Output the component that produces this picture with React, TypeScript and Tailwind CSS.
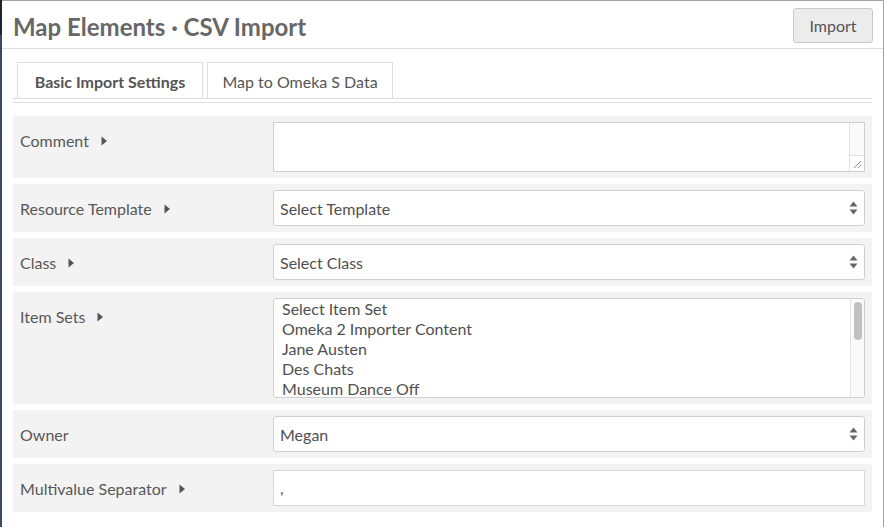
import React from 'react'

const itemSets = ['Select Item Set', 'Omeka 2 Importer Content', 'Jane Austen', 'Des Chats', 'Museum Dance Off']

const Caret = () => (
  <svg width="7" height="10" viewBox="0 0 7 10" className="ml-[12px] shrink-0">
    <path d="M0.5 0.5 L6 5 L0.5 9.5 Z" fill="#555" />
  </svg>
)

const SelectArrows = () => (
  <svg width="9" height="14" viewBox="0 0 9 14" className="shrink-0">
    <path d="M4.5 0.5 L8.5 5.5 L0.5 5.5 Z" fill="#666" />
    <path d="M4.5 13.5 L8.5 8.5 L0.5 8.5 Z" fill="#666" />
  </svg>
)

const Label = ({ text, caret = true }: { text: string; caret?: boolean }) => (
  <div className="w-[260px] shrink-0 pl-[7px] pt-[9px] flex items-center self-start">
    <span className="text-[16px] leading-[20px] text-[#585858]">{text}</span>
    {caret && <Caret />}
  </div>
)

const Row = ({ children }: { children: React.ReactNode }) => (
  <div className="flex bg-[#f3f3f3] py-[6px] pr-[7px]">{children}</div>
)

const FakeSelect = ({ value }: { value: string }) => (
  <div className="flex-1 h-[36px] bg-white border border-[#cfcfcf] rounded-[3px] flex items-center pl-[6px] pr-[6px]">
    <span className="flex-1 text-[16px] text-[#505050] pt-[1px]">{value}</span>
    <SelectArrows />
  </div>
)

export default function App() {
  return (
    <div className="w-[886px] h-[527px] flex bg-white font-['Lato',sans-serif] overflow-hidden">
      <div className="w-[2px] shrink-0 flex flex-col">
        <div className="h-[35px] bg-[#1c242e]" />
        <div className="flex-1 bg-[#3d4a5c]" />
      </div>
      <div className="w-[882px] shrink-0 border-t border-r border-[#a3a3a3] flex flex-col">
        <div className="h-[48px] border-b border-[#dedede] flex items-center justify-between pl-[11px] pr-[10px]">
          <h1 className="text-[24px] font-bold text-[#676767] pt-[4px]">
            Map Elements · CSV Import
          </h1>
          <button className="w-[80px] h-[35px] mt-[2px] bg-[#ececec] border border-[#c8c8c8] rounded-[3px] text-[16px] text-[#555]">
            Import
          </button>
        </div>

        <div className="px-[11px] pt-[13px]">
          <div className="flex border-b border-[#dedede] pl-[4px] gap-[4px]">
            <div className="w-[186px] h-[36px] pt-[2px] border border-b-0 border-[#dedede] flex items-center justify-center text-[16px] font-bold text-[#555]">
              Basic Import Settings
            </div>
            <div className="w-[186px] h-[36px] pt-[2px] border border-b-0 border-[#dedede] flex items-center justify-center text-[16px] text-[#555]">
              Map to Omeka S Data
            </div>
          </div>
          <div className="mt-[3px] border-t border-[#dedede]" />

          <div className="mt-[13px] flex flex-col gap-[6px]">
            <Row>
              <Label text="Comment" />
              <div className="flex-1 h-[50px] bg-white border border-[#cfcfcf] flex justify-end">
                <div className="w-[15px] flex flex-col border-l border-[#e0e0e0]">
                  <div className="flex-1 bg-[#fafafa]" />
                  <div className="h-[16px] border-t border-[#e0e0e0] bg-white flex items-end justify-end">
                    <svg width="10" height="10" viewBox="0 0 10 10" className="mb-[2px] mr-[2px]">
                      <path d="M9 2 L2 9 M9 6 L6 9" stroke="#888" strokeWidth="1" />
                    </svg>
                  </div>
                </div>
              </div>
            </Row>
            <Row>
              <Label text="Resource Template" />
              <FakeSelect value="Select Template" />
            </Row>
            <Row>
              <Label text="Class" />
              <FakeSelect value="Select Class" />
            </Row>
            <Row>
              <Label text="Item Sets" />
              <div className="flex-1 h-[100px] bg-white border border-[#cfcfcf] rounded-[3px] flex overflow-hidden">
                <div className="flex-1 pl-[8px] flex flex-col">
                  {itemSets.map((s) => (
                    <div key={s} className="h-[20px] leading-[20px] text-[16px] text-[#505050]">
                      {s}
                    </div>
                  ))}
                </div>
                <div className="w-[14px] border-l border-[#e3e3e3] bg-[#fafafa] flex justify-center pt-[3px]">
                  <div className="w-[8px] h-[38px] rounded-full bg-[#c1c1c1]" />
                </div>
              </div>
            </Row>
            <Row>
              <Label text="Owner" caret={false} />
              <FakeSelect value="Megan" />
            </Row>
            <Row>
              <Label text="Multivalue Separator" />
              <div className="flex-1 h-[36px] bg-white border border-[#d8d8d8] flex items-center pl-[6px]">
                <span className="text-[16px] text-[#505050]">,</span>
              </div>
            </Row>
          </div>
        </div>
      </div>
    </div>
  )
}
